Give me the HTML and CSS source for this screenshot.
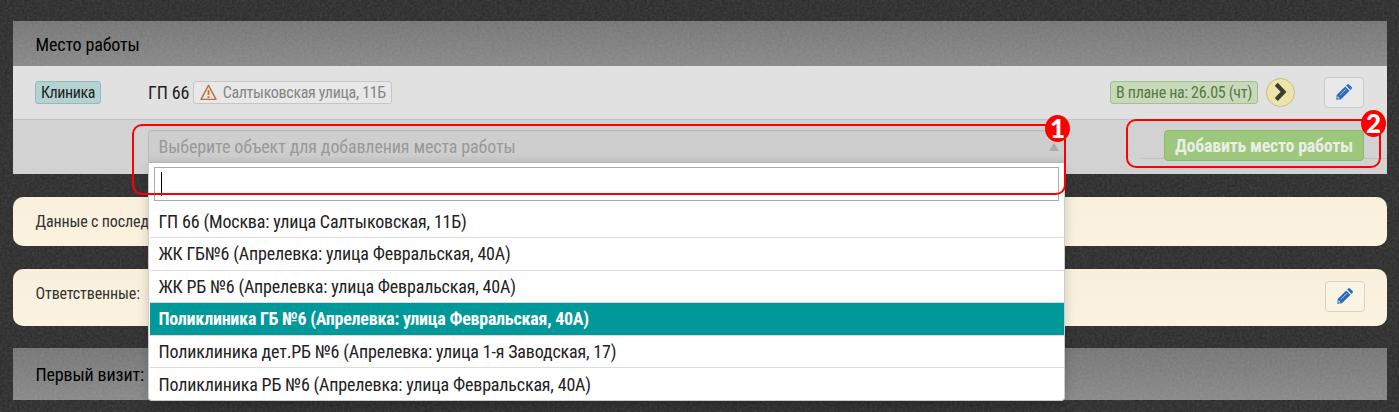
FILE: index.html
```html
<!DOCTYPE html>
<html lang="ru">
<head>
<meta charset="utf-8">
<title>Место работы</title>
<link rel="stylesheet" href="styles.css">
</head>
<body>
<svg class="texture" aria-hidden="true"><filter id="grain" x="0" y="0" width="100%" height="100%" color-interpolation-filters="sRGB"><feTurbulence type="fractalNoise" baseFrequency="0.4" numOctaves="2" seed="4"/><feColorMatrix type="matrix" values="0.11 0 0 0 0.155  0.11 0 0 0 0.155  0.11 0 0 0 0.155  0 0 0 0 1"/></filter><rect width="100%" height="100%" filter="url(#grain)"/></svg>
<svg class="symbols"><symbol id="pencil" viewBox="0 0 16 16"><path fill="#2b6cb8" d="M.3 15.700.7 11 9.200 2.500l4.300 4.300L5 15.300zM10.100 1.600 11.300.4q.8-.7 1.600 0l2.700 2.700q.7.800 0 1.600l-1.200 1.200z"/><path fill="none" stroke="#e8eef5" stroke-width=".7" d="m4 11.200 6-6"/><path fill="#e8eef5" d="m1.600 12.300 2 2-1.600.3-.7-.7z"/></symbol></svg>
<main class="page">
  <section class="panel">
    <header class="bar"><span class="t big">Место работы</span></header>
    <div class="row">
      <div class="kind"><span class="tag teal"><span class="t">Клиника</span></span></div>
      <span class="t big name">ГП 66</span>
      <span class="tag plain"><svg class="warn" viewBox="0 0 17 17"><path d="M8.500 1.300 16 15.400H1z" fill="#ebe5df" stroke="#bd7139" stroke-width="1.400" stroke-linejoin="round"/><path d="M8.500 6v5M8.500 12.200v1.800" stroke="#bd7139" stroke-width="1.800"/></svg><span class="t">Салтыковская улица, 11Б</span></span>
      <div class="actions">
        <span class="tag green"><span class="t">В плане на: 26.05 (чт)</span></span>
        <span class="go"><svg width="29" height="29" viewBox="0 0 29 29"><path d="m10.300 6.300 7.200 7.600-7.200 7.600" fill="none" stroke="#3b3a33" stroke-width="4.200"/></svg></span>
        <button class="edit"><svg width="16" height="16"><use href="#pencil"/></svg></button>
      </div>
    </div>
    <div class="row add">
      <div class="select">
        <div class="choice"><span class="t big">Выберите объект для добавления места работы</span><i class="arrow"></i></div>
        <div class="drop">
          <div class="search"><i class="caret"></i></div>
          <ul class="options">
            <li><span class="t big">ГП 66 (Москва: улица Салтыковская, 11Б)</span></li>
            <li><span class="t big">ЖК ГБ№6 (Апрелевка: улица Февральская, 40А)</span></li>
            <li><span class="t big">ЖК РБ №6 (Апрелевка: улица Февральская, 40А)</span></li>
            <li class="active"><span class="t big">Поликлиника ГБ №6 (Апрелевка: улица Февральская, 40А)</span></li>
            <li><span class="t big">Поликлиника дет.РБ №6 (Апрелевка: улица 1-я Заводская, 17)</span></li>
            <li><span class="t big">Поликлиника РБ №6 (Апрелевка: улица Февральская, 40А)</span></li>
          </ul>
        </div>
        <div class="mark one"><b class="num">1</b></div>
      </div>
      <div class="submit"><i class="rule"></i><button class="primary"><span class="t big">Добавить место работы</span></button><div class="mark two"><b class="num">2</b></div></div>
    </div>
  </section>
  <section class="card visit"><span class="t">Данные с послед</span></section>
  <section class="card owners"><span class="t">Ответственные:</span><button class="edit"><svg width="16" height="16"><use href="#pencil"/></svg></button></section>
  <section class="bar first"><span class="t big">Первый визит:</span></section>
</main>
</body>
</html>
```
FILE: styles.css
```css
* { box-sizing: border-box; }
body { margin: 0; height: 412px; overflow: hidden; background: #343434; color: #222; font-family: "Roboto Condensed", Roboto, sans-serif; font-stretch: 75%; font-size: 16px; line-height: 20px; }
.texture { position: absolute; inset: 0; width: 100%; height: 100%; }
.symbols { display: none; }
.page { position: relative; padding: 21px 12px 0 13px; }
.t { white-space: nowrap; letter-spacing: -.14px; }
.big { font-size: 18px; }
.bar { height: 45px; padding: 2px 22.500px 0; display: flex; align-items: center; color: #000; background: linear-gradient(rgba(255,255,255,.34), rgba(255,255,255,.43)); }
.row { height: 54px; display: flex; align-items: center; background: #e1e1e1; border-bottom: 1px solid #c4c4c4; padding: 0 23px 0 22px; }
.kind { width: 113px; }
.name { margin-right: 4px; }
.tag { display: inline-flex; align-items: center; height: 23px; padding: 0 5px; border: 1px solid #c6c6c6; border-radius: 3px; }
.tag .t { letter-spacing: -.32px; }
.teal { background: #b2d3d1; border-color: #96b9b9; }
.teal .t { letter-spacing: -.42px; }
.plain { background: #e8e8e8; color: #858585; }
.warn { width: 17px; height: 17px; margin: 0 5.500px 0 1px; }
.green { background: #c8d9ba; border-color: #a2bf93; color: #557a42; }
.actions { margin-left: auto; display: flex; align-items: center; }
.go { width: 29px; height: 29px; margin: 0 29px 0 8px; border: 1px solid #c5bd8b; border-radius: 50%; background: #ece4a9; }
.go svg { display: block; margin: -1px; }
.edit { width: 40px; height: 31px; padding: 0; border: 1px solid #c9c9c9; border-radius: 4px; background: #e8e8e8; display: flex; align-items: center; justify-content: center; }
.edit svg { margin-top: -2px; }
.add { height: 54px; background: #d2d2d2; border: 0; padding: 0 23px 0 135px; align-items: flex-start; }
.select { position: relative; width: 917px; margin-top: 10px; }
.choice { height: 33px; display: flex; align-items: center; justify-content: space-between; padding: 0 5px 0 9.500px; border: 1px solid #b9b9b9; border-bottom: 0; border-radius: 4px 4px 0 0; background: linear-gradient(#cecece 70%, #c4c4c4); color: #999; }
.choice .t { letter-spacing: -.12px; }
.arrow { border: 5px solid transparent; border-top: 0; border-bottom: 8px solid #aaa; }
.drop { position: absolute; z-index: 2; top: 32px; left: 0; width: 917px; height: 239px; padding: 4px 0 0 1px; background: #fff; border: 1px solid #ccc; border-top-color: #b5b5b5; border-radius: 0 0 4px 4px; box-shadow: 0 6px 12px rgba(0,0,0,.18); }
.search { width: 905px; height: 34px; margin-left: 4px; border: 1px solid #aaa; padding: 4px 6px; }
.caret { display: block; width: 1px; height: 24px; background: #000; }
.options { list-style: none; margin: 4.400px 0 0; padding: 0; }
.options li { height: 32.600px; padding: 1px 8.500px 0; display: flex; align-items: center; border-bottom: 1px solid #ddd; }
.options li:last-child { border: 0; }
.options .t { letter-spacing: -.17px; }
.options .active { background: #009899; color: #fff; font-weight: 700; }
.options .active .t { letter-spacing: -.26px; }
.mark { position: absolute; z-index: 3; border: 2px solid #f00; border-radius: 10px; }
.one { left: -16px; top: -6px; width: 934px; height: 71px; }
.num { position: absolute; width: 25px; height: 27px; border-radius: 50%; background: #f00; color: #fff; display: flex; align-items: center; justify-content: center; font: 900 26px/27px Lato, sans-serif; }
.one .num { right: -6px; top: -11px; }
.submit { position: relative; margin: 10px 0 0 auto; }
.rule { position: absolute; left: -23px; top: 28px; width: 246px; height: 1px; background: #c3c3c3; }
.primary { position: relative; display: flex; align-items: center; justify-content: center; width: 200px; height: 31px; padding: 0; border: 1px solid #8abb69; border-radius: 4px; background: #9dc77c; color: #e9eee6; font: inherit; font-weight: 700; line-height: 20px; }
.primary .t { letter-spacing: -.28px; }
.two { left: -38px; top: -11px; width: 255px; height: 49px; }
.two .num { right: -7px; top: -11px; }
.card { margin-top: 23px; padding: 15px 22.500px; height: 49px; border-radius: 10px; background: linear-gradient(#f9f0dc, #faf3e0); color: #333; }
.owners { height: 57px; display: flex; justify-content: space-between; }
.owners .edit { margin-top: -3px; border-color: #d8d2c5; background: #faf4e5; }
.first { height: 52px; margin-top: 22px; }
```
